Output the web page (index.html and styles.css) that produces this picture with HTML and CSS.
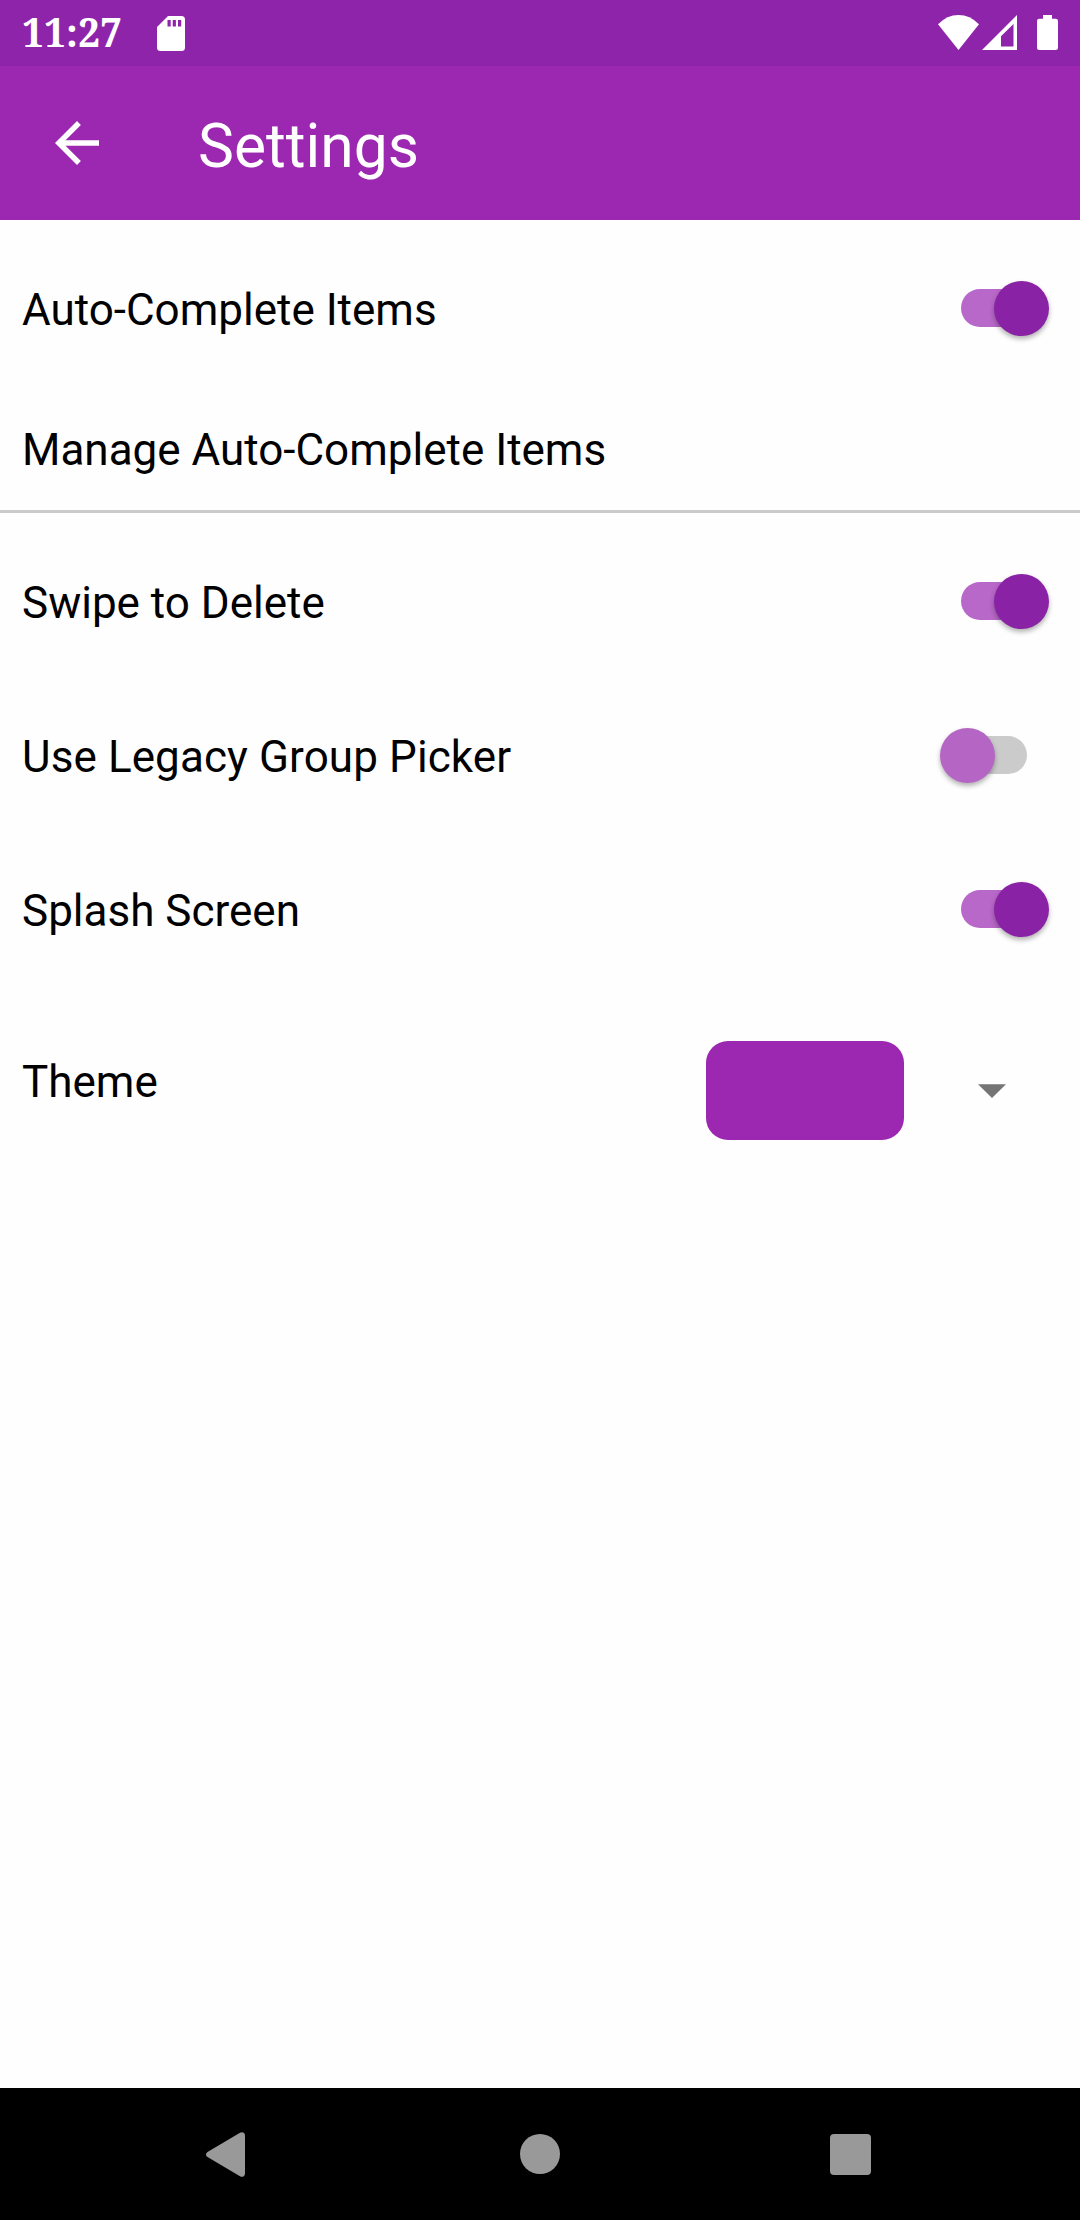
FILE: index.html
```
<!DOCTYPE html>
<html lang="en">

<head>
    <meta charset="utf-8">
    <title>Settings</title>
    <link rel="stylesheet" href="styles.css">
</head>

<body>
    <div class="status-bar">
        <span class="time">11:27</span>
        <svg class="sd-card" width="28" height="35" viewBox="0 0 28 35">
            <path fill-rule="evenodd" d="M11 0H24.5Q28 0 28 3.5V31.5Q28 35 24.5 35H3.5Q0 35 0 31.5V11ZM10.5 4V10.5H13.7V4ZM15.7 4V10.5H18.9V4ZM21 4V10.5H24.2V4Z" />
        </svg>
        <div class="status-icons">
            <svg width="41" height="35" viewBox="0 0 41 35">
                <path d="M0 9.3Q9 0 20.5 0T41 9.3L20.5 35Z" />
            </svg>
            <svg class="signal" width="35" height="35" viewBox="0 0 35 35">
                <path fill-rule="evenodd" d="M35 0V35H0ZM31.5 9L19 21.3V31.5H31.5Z" />
            </svg>
            <svg class="battery" width="21" height="35" viewBox="0 0 21 35">
                <path d="M6 0H15V3.7H18.7Q21 3.7 21 6V33Q21 35 18.7 35H2.3Q0 35 0 33V6Q0 3.7 2.3 3.7H6Z" />
            </svg>
        </div>
    </div>

    <header class="app-bar">
        <svg width="66" height="66" viewBox="0 0 24 24">
            <path d="M20 11H7.83l5.59-5.59L12 4l-8 8 8 8 1.41-1.41L7.83 13H20v-2z" />
        </svg>
        <h1>Settings</h1>
    </header>

    <main class="settings">
        <div class="row">
            <span class="label">Auto-Complete Items</span>
            <div class="switch on"><div class="thumb"></div></div>
        </div>
        <div class="row manage">
            <span class="label">Manage Auto-Complete Items</span>
        </div>
        <div class="row">
            <span class="label">Swipe to Delete</span>
            <div class="switch on"><div class="thumb"></div></div>
        </div>
        <div class="row legacy">
            <span class="label">Use Legacy Group Picker</span>
            <div class="switch"><div class="thumb"></div></div>
        </div>
        <div class="row">
            <span class="label">Splash Screen</span>
            <div class="switch on"><div class="thumb"></div></div>
        </div>
        <div class="row theme">
            <span class="label">Theme</span>
            <div class="swatch"></div>
            <svg class="caret" width="28" height="14" viewBox="0 0 28 14">
                <path d="M0 0.3H28L14 14Z" />
            </svg>
        </div>
    </main>

    <nav class="nav-bar">
        <svg class="back" width="39" height="45" viewBox="0 0 39 45">
            <path d="M34 0.7Q36 -0.4 37.8 0.8Q39 1.8 39 3.5V41.5Q39 43.2 37.8 44.2Q36 45.4 34 44.3L1.5 25Q0 24 0 22.5T1.5 20Z" />
        </svg>
        <div class="home"></div>
        <div class="recents"></div>
    </nav>
</body>

</html>
```

FILE: styles.css
```
* {
    box-sizing: border-box;
}

body {
    margin: 0;
    width: 1080px;
    height: 2220px;
    display: flex;
    flex-direction: column;
    background-color: #fefefe;
    color: #000;
    font-family: Roboto, sans-serif;
}

svg {
    display: block;
    flex: none;
}

/* Status bar */
.status-bar {
    display: flex;
    align-items: center;
    height: 66px;
    padding: 0 22px;
    background-color: #8e24aa;
    color: #fff;
    fill: #fff;
}

.time {
    width: 135px;
    font-family: "Noto Serif", "Liberation Serif", serif;
    font-size: 39px;
    font-weight: bold;
    line-height: 64px;
    padding-bottom: 2px;
}

.status-icons {
    display: flex;
    margin-left: auto;
    padding-bottom: 1px;
}

.signal {
    margin-left: 3px;
}

.battery {
    margin-left: 20px;
}

/* App bar */
.app-bar {
    display: flex;
    align-items: center;
    height: 154px;
    padding: 0 44px;
    background-color: #9c27b0;
    color: #fff;
    fill: #fff;
}

.app-bar h1 {
    margin: 8px 0 0 88px;
    font-size: 60.5px;
    font-weight: 400;
    line-height: 70px;
}

/* Settings list */
.settings {
    flex: 1;
}

.row {
    display: flex;
    align-items: center;
    justify-content: space-between;
    height: 154px;
    padding: 22px 22px 0;
}

.label {
    padding-top: 4px;
    font-size: 44px;
    line-height: 52px;
}

.manage {
    height: 139px;
    padding-top: 12px;
    border-bottom: 3px solid #cacaca;
}

.legacy .label {
    letter-spacing: 0.1px;
}

.switch {
    display: flex;
    align-items: center;
    width: 66px;
    height: 38px;
    margin-right: 31px;
    border-radius: 19px;
    background-color: #cbcbcb;
}

.thumb {
    flex: none;
    width: 55px;
    height: 55px;
    margin-left: -21.5px;
    border-radius: 50%;
    background-color: #b566c4;
    box-shadow: 0 3px 5px rgba(0, 0, 0, 0.3);
}

.switch.on {
    background-color: #b868c8;
}

.switch.on .thumb {
    margin-left: 32.5px;
    background-color: #8a22a6;
}

.theme {
    height: 231px;
    padding: 0 74px 0 22px;
}

.theme .label {
    margin-right: auto;
    padding: 0 0 17px;
}

.swatch {
    width: 198px;
    height: 99px;
    border-radius: 22px;
    background-color: #9c27b0;
}

.caret {
    margin-left: 74px;
    fill: #757575;
}

/* Navigation bar */
.nav-bar {
    display: flex;
    align-items: center;
    height: 132px;
    padding-left: 206px;
    background-color: #000;
    fill: #999;
}

.home {
    width: 40px;
    height: 40px;
    margin: 0 270px 0 275px;
    border-radius: 50%;
    background-color: #999;
}

.recents {
    width: 41px;
    height: 41px;
    border-radius: 4px;
    background-color: #999;
}
```
